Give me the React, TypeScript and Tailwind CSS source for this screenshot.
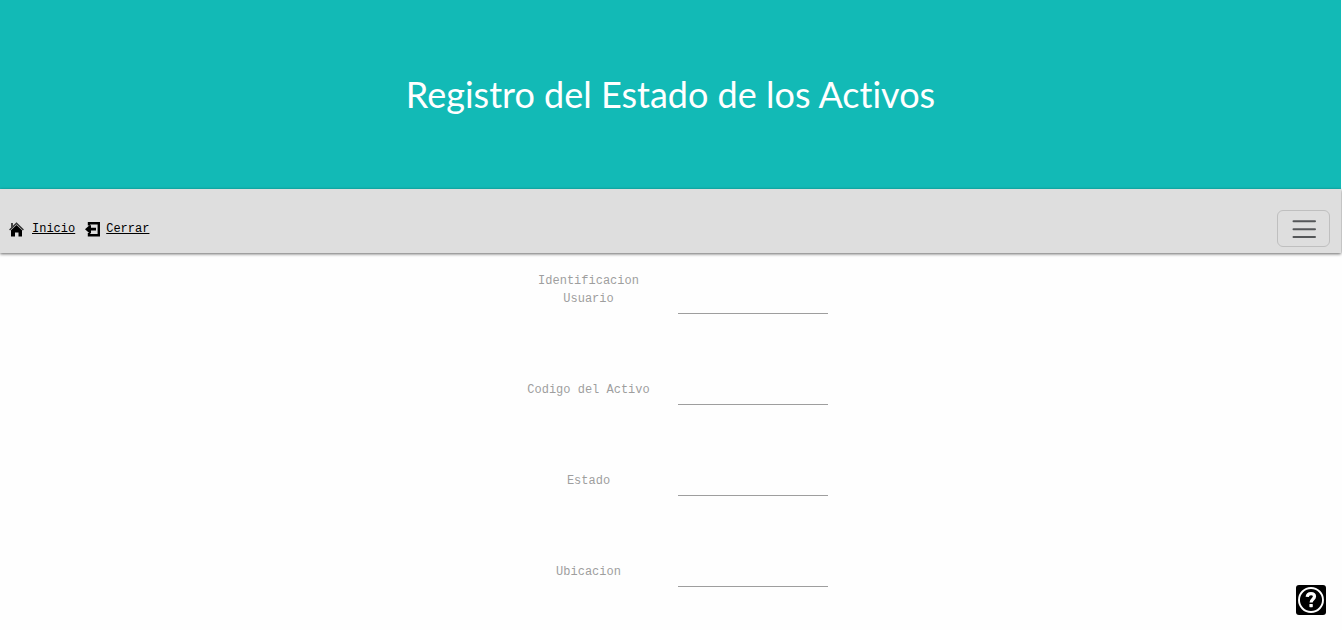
const fields = [
  { id: "usuario", label: "Identificacion Usuario" },
  { id: "codigo", label: "Codigo del Activo" },
  { id: "estado", label: "Estado" },
  { id: "ubicacion", label: "Ubicacion" },
];

function HomeIcon() {
  return (
    <svg viewBox="0 0 15 16" className="h-4 w-[15px]" aria-hidden="true">
      <path d="M2 2h2v3L2 7z" fill="#444" />
      <path d="M.6 9 7.500 2.200 14.400 9" fill="none" stroke="#333" strokeWidth="1.500" />
      <path d="M2 9.200 7.500 4 13 9.200V15.500H9.500V11.500H6V15.500H2z" fill="#000" />
    </svg>
  );
}

function ExitIcon() {
  return (
    <svg viewBox="0 0 15 16" className="h-4 w-[15px]" aria-hidden="true">
      <path d="M4 4.500V2.200h9.800v12H4V12" fill="none" stroke="#000" strokeWidth="2.400" />
      <path d="M0 8.200 4.500 4.200h1.500v2.600h5v2.800H6v2.600H4.500z" fill="#000" />
    </svg>
  );
}

function HelpIcon() {
  return (
    <svg viewBox="0 0 30 30" className="size-[30px]" aria-hidden="true">
      <rect width="30" height="30" rx="3" fill="#000" />
      <circle cx="15" cy="15" r="12" fill="none" stroke="#fff" strokeWidth="1.900" />
      <path d="M11.200 11.900c.2-2.200 1.700-3.300 3.800-3.300s3.500 1.200 3.500 3c0 2.600-3.400 2.700-3.400 5.900" fill="none" stroke="#fff" strokeWidth="3.200" />
      <rect x="13.400" y="19" width="3.400" height="3.200" rx=".6" fill="#fff" />
    </svg>
  );
}

export default function App() {
  return (
    <div className="min-h-screen bg-[#fefefe] pr-px font-['Liberation_Mono','Courier_New',monospace] text-xs">
      <header className="flex h-[189px] items-center justify-center bg-[#12bab6] pb-0.5">
        <h1 className="font-['Lato',sans-serif] text-4xl text-white [font-variant-ligatures:none]">
          Registro del Estado de los Activos
        </h1>
      </header>
      <nav className="relative flex h-16 items-end justify-between bg-[#dedede] pr-[11px] pb-1.5 pl-[9px] shadow-[0_1px_3px_rgba(0,0,0,0.6)]">
        <div className="flex items-center gap-2.5 pb-2.5 text-black">
          <a href="#inicio" className="flex items-center gap-2 underline">
            <HomeIcon />
            Inicio
          </a>
          <a href="#cerrar" className="flex items-center gap-1.5 underline">
            <ExitIcon />
            Cerrar
          </a>
        </div>
        <button
          type="button"
          aria-label="Menu"
          className="flex h-[37px] w-[53px] items-center justify-center rounded-md border border-[#bfbfbf]"
        >
          <svg viewBox="0 0 30 30" className="size-[30px]" aria-hidden="true">
            <path d="M4.500 7.300h21.500M4.500 15.200h21.500M4.500 22.900h21.500" stroke="#555759" strokeWidth="2" strokeLinecap="round" />
          </svg>
        </button>
      </nav>
      <main className="flex justify-center pt-[15px]">
        <form className="flex flex-col gap-[45px]">
          {fields.map((field) => (
            <div key={field.id} className="flex items-end gap-3.5">
              <label htmlFor={field.id} className="w-[150px] pb-1.5 text-center leading-[18px] text-[#9e9e9e]">
                {field.label}
              </label>
              <input
                id={field.id}
                type="text"
                className="h-[46px] w-[150px] border-b border-[#9e9e9e] bg-transparent text-[#333] outline-none"
              />
            </div>
          ))}
        </form>
      </main>
      <button type="button" aria-label="Ayuda" className="fixed right-4 bottom-[15px]">
        <HelpIcon />
      </button>
    </div>
  );
}
